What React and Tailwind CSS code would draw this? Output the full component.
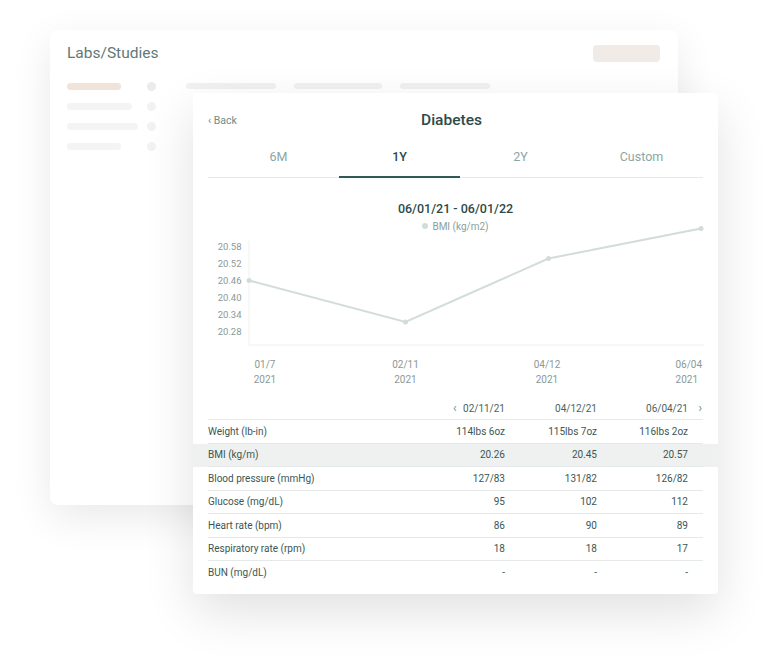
import React from "react";

const rows = [
  { label: "Weight (lb-in)", v: ["114lbs 6oz", "115lbs 7oz", "116lbs 2oz"] },
  { label: "BMI (kg/m)", v: ["20.26", "20.45", "20.57"], hl: true },
  { label: "Blood pressure (mmHg)", v: ["127/83", "131/82", "126/82"] },
  { label: "Glucose (mg/dL)", v: ["95", "102", "112"] },
  { label: "Heart rate (bpm)", v: ["86", "90", "89"] },
  { label: "Respiratory rate (rpm)", v: ["18", "18", "17"] },
  { label: "BUN (mg/dL)", v: ["-", "-", "-"] },
];

const tabs = ["6M", "1Y", "2Y", "Custom"];

function BackCard() {
  return (
    <div className="absolute left-[50px] top-[30px] w-[628px] h-[475px] rounded-lg bg-white shadow-[0_12px_40px_rgba(0,0,0,0.09)] px-[17px] pt-[13px]">
      <div className="flex items-center justify-between h-[20px]">
        <span className="text-[15.5px] text-[#5f7977] leading-[20px]">Labs/Studies</span>
        <div className="w-[67px] h-[17px] rounded bg-[#f0ebe6] mr-[1px]" />
      </div>
      <div className="flex mt-[20px]">
        <div className="flex flex-col gap-[13px] w-[80px]">
          <div className="w-[54px] h-[7px] rounded-full bg-[#efe3da]" />
          <div className="w-[65px] h-[7px] rounded-full bg-[#f4f4f4]" />
          <div className="w-[71px] h-[7px] rounded-full bg-[#f4f4f4]" />
          <div className="w-[54px] h-[7px] rounded-full bg-[#f4f4f4]" />
        </div>
        <div className="flex flex-col gap-[11px] mt-[-1px]">
          <div className="w-[9px] h-[9px] rounded-full bg-[#ebebeb]" />
          <div className="w-[9px] h-[9px] rounded-full bg-[#f2f2f2]" />
          <div className="w-[9px] h-[9px] rounded-full bg-[#f2f2f2]" />
          <div className="w-[9px] h-[9px] rounded-full bg-[#f2f2f2]" />
        </div>
        <div className="flex gap-[18px] ml-[30px]">
          <div className="w-[90px] h-[6px] rounded-full bg-[#f1f1f1]" />
          <div className="w-[88px] h-[6px] rounded-full bg-[#f1f1f1]" />
          <div className="w-[90px] h-[6px] rounded-full bg-[#f1f1f1]" />
        </div>
      </div>
    </div>
  );
}

function Chart() {
  const yl = ["20.58", "20.52", "20.46", "20.40", "20.34", "20.28"];
  const pts = [
    [41, 44.5],
    [197.5, 86],
    [340.5, 22.5],
    [493, -7.5],
  ];
  const xl = [
    [57, "01/7", "middle", 57],
    [197.5, "02/11", "middle", 197.5],
    [339, "04/12", "middle", 339],
    [494, "06/04", "end", 490],
  ];
  return (
    <svg width="496" height="150" className="overflow-visible block" style={{ fontFamily: "Roboto, 'Liberation Sans', sans-serif" }}>
      {yl.map((t, i) => (
        <text key={t} x="33.5" y={10.4 + i * 17.1} dy="3.5" textAnchor="end" fontSize="9.5" fill="#8b9998">
          {t}
        </text>
      ))}
      <line x1="41" y1="4.5" x2="41" y2="109" stroke="#eef1f0" strokeWidth="1" />
      <line x1="41" y1="109" x2="496" y2="109" stroke="#eef1f0" strokeWidth="1" />
      <polyline points={pts.map((p) => p.join(",")).join(" ")} fill="none" stroke="#d2ddd9" strokeWidth="2" />
      {pts.map((p, i) => (
        <circle key={i} cx={p[0]} cy={p[1]} r="2.5" fill="#d2ddd9" />
      ))}
      {xl.map(([x, t, a, x2]) => (
        <g key={t} fontSize="10" fill="#8b9998" textAnchor={a}>
          <text x={x} y="128" dy="3.5">{t}</text>
          <text x={x2} y="143" dy="3.5">2021</text>
        </g>
      ))}
    </svg>
  );
}

const cols = "grid grid-cols-[205px_92px_92px_91px_15px]";

function FrontCard() {
  return (
    <div className="absolute left-[193px] top-[93px] w-[525px] h-[501px] rounded bg-white shadow-[0_18px_50px_rgba(0,0,0,0.12)] px-[15px] pt-[16px]">
      <div className="grid grid-cols-[1fr_auto_1fr] items-center h-[20px]">
        <span className="text-[10.5px] text-[#6e8a88]">‹ Back</span>
        <span className="text-center text-[15.5px] font-medium text-[#2d4a48] mr-[8px]">Diabetes</span>
        <span />
      </div>
      <div className="flex pl-[10px] mt-[18px] border-b border-[#e6e9e9]">
        {tabs.map((t) => (
          <div
            key={t}
            className={
              t === "1Y"
                ? "w-[121px] text-center leading-[20px] pb-[9px] -mb-px border-b-2 border-[#2f5a57] text-[12.5px] font-medium text-[#2d4a48]"
                : "w-[121px] text-center leading-[20px] pb-[9px] -mb-px border-b-2 border-transparent text-[12.5px] text-[#8ba6a3]"
            }
          >
            {t}
          </div>
        ))}
      </div>
      <div className="mt-[22px] text-center text-[12.5px] font-medium leading-[18px] text-[#2d4a48]">06/01/21 - 06/01/22</div>
      <div className="flex items-center justify-center gap-[4px] h-[16px] text-[10px] text-[#8b9e9c]">
        <span className="w-[6px] h-[6px] rounded-full bg-[#d2ddd9]" />
        <span>BMI (kg/m2)</span>
      </div>
      <div className="mt-[2px]">
        <Chart />
      </div>
      <div className="mt-[11px] text-[10px] text-[#3a5755]">
        <div className={cols + " h-[23px] items-center border-b border-[#e6e9e9] text-[#4a6462]"}>
          <span />
          <span className="flex justify-between items-center pl-[40px]">
            <span className="text-[12px] text-[#6e8a88]">‹</span>
            <span>02/11/21</span>
          </span>
          <span className="text-right">04/12/21</span>
          <span className="text-right">06/04/21</span>
          <span className="text-right text-[12px] text-[#6e8a88] pr-[1px]">›</span>
        </div>
        {rows.map((r, i) => (
          <div key={r.label} className={r.hl ? "-mx-[15px] px-[15px] bg-[#eef1f0]" : ""}>
            <div
              className={
                i === rows.length - 1
                  ? cols + " h-[23.5px] items-center"
                  : cols + " h-[23.5px] items-center border-b border-[#e6e9e9]"
              }
            >
              <span>{r.label}</span>
              {r.v.map((v, j) => (
                <span key={j} className="text-right">
                  {v}
                </span>
              ))}
              <span />
            </div>
          </div>
        ))}
      </div>
    </div>
  );
}

export default function App() {
  return (
    <div className="relative w-[768px] h-[664px] bg-white overflow-hidden" style={{ fontFamily: "Roboto, 'Liberation Sans', sans-serif" }}>
      <BackCard />
      <FrontCard />
    </div>
  );
}
